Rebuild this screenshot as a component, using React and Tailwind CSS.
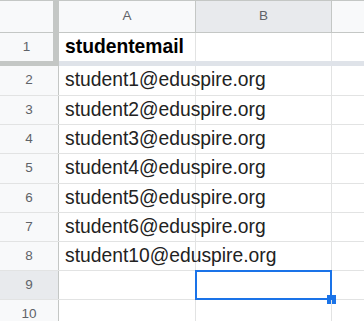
const rows = [
  { n: 2, e: "student1@eduspire.org", h: "h-[30px]" },
  { n: 3, e: "student2@eduspire.org", h: "h-[29px]" },
  { n: 4, e: "student3@eduspire.org", h: "h-[29px]" },
  { n: 5, e: "student4@eduspire.org", h: "h-[30px]" },
  { n: 6, e: "student5@eduspire.org", h: "h-[29px]" },
  { n: 7, e: "student6@eduspire.org", h: "h-[29px]" },
  { n: 8, e: "student10@eduspire.org", h: "h-[29px]" },
  { n: 9, e: "", h: "h-[29px]" },
  { n: 10, e: "", h: "h-[29px]" },
];

export default function App() {
  return (
    <div className="w-[364px] h-[321px] overflow-hidden bg-white font-['Liberation_Sans',Arial,sans-serif] relative">
      {/* top frozen block */}
      <div className="flex h-[61px]">
        <div className="w-[53px] flex flex-col shrink-0">
          <div className="h-[33px] bg-[#f8f9fa] border-t border-b border-[#c4c7c5]" />
          <div className="h-[28px] bg-[#f8f9fa] flex items-center justify-center text-[13.5px] text-[#5f6368]">1</div>
        </div>
        <div className="w-[6px] shrink-0 bg-[#c4c7c5]" />
        <div className="flex-1 flex flex-col">
          <div className="h-[33px] flex border-t border-b border-[#c4c7c5] text-[13.5px] text-[#5f6368]">
            <div className="w-[137px] shrink-0 bg-[#f8f9fa] border-r border-[#c4c7c5] flex items-center justify-center">A</div>
            <div className="w-[136px] shrink-0 bg-[#e8eaed] border-r border-[#c4c7c5] flex items-center justify-center">B</div>
            <div className="flex-1 bg-[#f8f9fa]" />
          </div>
          <div className="h-[28px] flex">
            <div className="w-[137px] shrink-0 border-r border-[#e2e3e3] flex items-center pl-[6px] text-[19.3px] font-bold text-black">studentemail</div>
            <div className="w-[136px] shrink-0 border-r border-[#e2e3e3]" />
            <div className="flex-1" />
          </div>
        </div>
      </div>
      {/* frozen row bar */}
      <div className="flex h-[5px]">
        <div className="w-[59px] shrink-0 bg-[#c4c7c5]" />
        <div className="flex-1 bg-[#dfe3e9]" />
      </div>
      {rows.map(({ n, e, h }) => {
        const sel = n === 9;
        return (
          <div key={n} className={h + " flex border-b border-[#e2e3e3]"}>
            <div
              className={
                sel
                  ? "w-[59px] shrink-0 bg-[#e8eaed] border-r border-[#c4c7c5] flex items-center justify-center text-[13.5px] text-[#5f6368]"
                  : "w-[59px] shrink-0 bg-[#f8f9fa] border-r border-[#c4c7c5] flex items-center justify-center text-[13.5px] text-[#5f6368]"
              }
            >
              {n}
            </div>
            <div className="w-[137px] shrink-0 border-r border-[#e2e3e3] flex items-center pl-[6px] text-[19.3px] text-[#222222] whitespace-nowrap">
              {e}
            </div>
            <div className="w-[136px] shrink-0 border-r border-[#e2e3e3] relative">
              {sel && (
                <>
                  <div className="absolute -left-[1px] -top-[1px] w-[137px] h-[30px] border-2 border-[#1a73e8]" />
                  <div className="absolute -right-[5px] -bottom-[5px] w-[9px] h-[9px] bg-[#1a73e8]" />
                </>
              )}
            </div>
            <div className="flex-1" />
          </div>
        );
      })}
    </div>
  );
}
